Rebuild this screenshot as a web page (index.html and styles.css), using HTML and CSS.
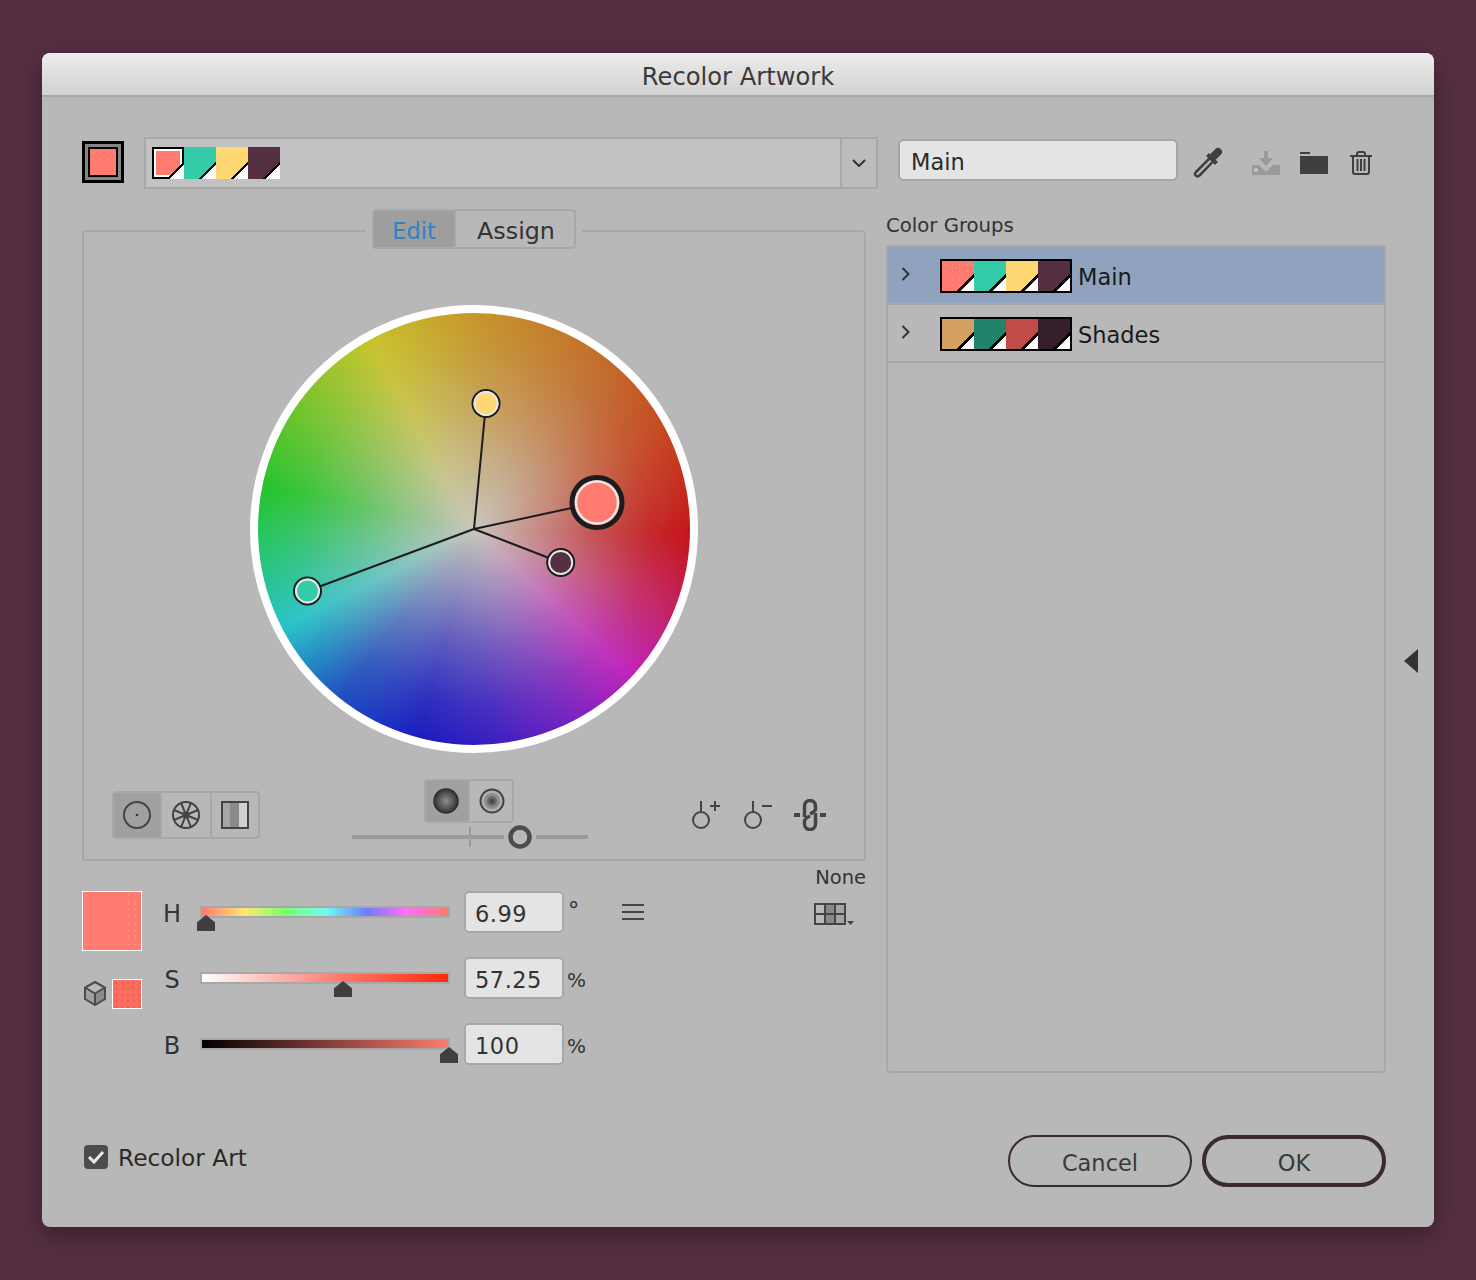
FILE: index.html
```html
<!DOCTYPE html>
<html lang="en">
<head>
    <meta charset="UTF-8">
    <title>Recolor Artwork</title>
    <link rel="stylesheet" href="styles.css">
</head>
<body>
    <div class="dialog">
        <div class="titlebar">Recolor Artwork</div>

        <div class="content">
            <!-- Active color, harmony strip, group name and group actions -->
            <div class="top-row">
                <div class="active-swatch"><div class="active-swatch-fill dotted"></div></div>
                <div class="strip">
                    <div class="strip-colors">
                        <div class="swatch coral selected dotted"></div>
                        <div class="swatch teal"></div>
                        <div class="swatch yellow"></div>
                        <div class="swatch plum"></div>
                    </div>
                    <div class="strip-arrow">
                        <svg width="14" height="8" viewBox="0 0 14 8"><path d="M1 1l6 6 6-6" fill="none" stroke="#333" stroke-width="2"/></svg>
                    </div>
                </div>
                <div class="name-field">Main</div>
                <svg class="icon-dropper" width="32" height="32" viewBox="0 0 32 32">
                    <path d="M22 9l4-4" stroke="#3f3f3f" stroke-width="8" stroke-linecap="round"/>
                    <path d="M15.500 7.500l9 9" stroke="#3f3f3f" stroke-width="4"/>
                    <path d="M18 11L4.500 24.500c-2 2-2 3-.7 4.200s2.200 1.300 4.200-.7L21 14.500" fill="none" stroke="#3f3f3f" stroke-width="2.500"/>
                </svg>
                <svg class="icon-save" width="28" height="26" viewBox="0 0 28 26">
                    <rect y="15" width="28" height="10" fill="#9a9a9a"/>
                    <path d="M7 15h14l-7 7z" fill="#b8b8b8"/>
                    <rect x="12" y="1" width="4" height="8" fill="#9a9a9a"/>
                    <path d="M7 8h14l-7 8z" fill="#9a9a9a"/>
                    <circle cx="4" cy="20" r="2" fill="#c6c6c6"/>
                </svg>
                <svg class="icon-folder" width="28" height="22" viewBox="0 0 28 22">
                    <rect width="10" height="2" fill="#3f3f3f"/>
                    <rect y="4" width="28" height="18" fill="#3f3f3f"/>
                </svg>
                <svg class="icon-trash" width="22" height="24" viewBox="0 0 22 24">
                    <path d="M0 5h22M7 5V3c0-1 1-2 2-2h4c1 0 2 1 2 2v2" fill="none" stroke="#3f3f3f" stroke-width="2"/>
                    <path d="M3 5v16c0 1 1 2 2 2h12c1 0 2-1 2-2V5" fill="none" stroke="#3f3f3f" stroke-width="2"/>
                    <path d="M7.500 8v12M11 8v12M14.500 8v12" stroke="#3f3f3f" stroke-width="2"/>
                </svg>
            </div>

            <div class="main">
                <div class="left-col">
                    <div class="panel">
                        <div class="tabs-wrap">
                            <div class="tabs">
                                <div class="tab active">Edit</div>
                                <div class="tab">Assign</div>
                            </div>
                        </div>

                        <!-- Color wheel with its harmony markers -->
                        <div class="wheel">
                            <svg class="wheel-markers" width="448" height="448" viewBox="0 0 448 448">
                                <g stroke="#1c1c1c" stroke-width="2">
                                    <path d="M224 224L236 98.500M224 224L347 197.500M224 224L310.700 257.500M224 224L57.500 286"/>
                                </g>
                                <circle cx="236" cy="98.500" r="13.500" fill="#ffd873" stroke="#1c1c1c" stroke-width="2"/>
                                <circle cx="236" cy="98.500" r="11.500" fill="none" stroke="#e6e6e6" stroke-width="2"/>
                                <circle cx="57.500" cy="286" r="13.500" fill="#33cba8" stroke="#1c1c1c" stroke-width="2"/>
                                <circle cx="57.500" cy="286" r="11.500" fill="none" stroke="#e6e6e6" stroke-width="2"/>
                                <circle cx="310.700" cy="257.500" r="13.500" fill="#552f42" stroke="#1c1c1c" stroke-width="2"/>
                                <circle cx="310.700" cy="257.500" r="11.500" fill="none" stroke="#e6e6e6" stroke-width="2"/>
                                <circle cx="347" cy="197.500" r="25" fill="#ff7b6f" stroke="#1c1c1c" stroke-width="5"/>
                                <circle cx="347" cy="197.500" r="21" fill="none" stroke="#e8e8e8" stroke-width="2.500"/>
                            </svg>
                        </div>

                        <div class="tools">
                            <div class="btn-group wheel-modes">
                                <div class="mode active">
                                    <svg width="30" height="30" viewBox="0 0 30 30"><circle cx="15" cy="15" r="13" fill="none" stroke="#444" stroke-width="2"/><circle cx="15" cy="15" r="1.300" fill="#333"/></svg>
                                </div>
                                <div class="mode">
                                    <svg width="30" height="30" viewBox="0 0 30 30">
                                        <circle cx="15" cy="15" r="13" fill="none" stroke="#444" stroke-width="2"/>
                                        <path transform="rotate(22.500 15 15)" d="M15 2v26M2 15h26M5.800 5.800l18.400 18.400M24.200 5.800L5.800 24.200" stroke="#444" stroke-width="2"/>
                                        <circle cx="15" cy="15" r="3.500" fill="#444"/>
                                    </svg>
                                </div>
                                <div class="mode">
                                    <svg width="30" height="30" viewBox="0 0 30 30">
                                        <rect x="2" y="2" width="9" height="26" fill="#a6a6a6"/>
                                        <rect x="10" y="2" width="9" height="26" fill="#8a8a8a"/>
                                        <rect x="19" y="2" width="9" height="26" fill="#d0d0d0"/>
                                        <rect x="2" y="2" width="26" height="26" fill="none" stroke="#444" stroke-width="2"/>
                                    </svg>
                                </div>
                            </div>

                            <div class="brightness">
                                <div class="btn-group shade-modes">
                                    <div class="mode active">
                                        <svg width="26" height="26" viewBox="0 0 26 26">
                                            <defs><radialGradient id="ballShade"><stop offset="0" stop-color="#8e8e8e"/><stop offset="1" stop-color="#333"/></radialGradient></defs>
                                            <circle cx="13" cy="13" r="12" fill="url(#ballShade)" stroke="#2e2e2e" stroke-width="1.500"/>
                                        </svg>
                                    </div>
                                    <div class="mode">
                                        <svg width="26" height="26" viewBox="0 0 26 26">
                                            <circle cx="13" cy="13" r="11.500" fill="#b0b0b0" stroke="#444" stroke-width="2"/>
                                            <circle cx="13" cy="13" r="8" fill="#8c8c8c"/>
                                            <circle cx="13" cy="13" r="5" fill="#6a6a6a"/>
                                            <circle cx="13" cy="13" r="2.500" fill="#4a4a4a"/>
                                        </svg>
                                    </div>
                                </div>
                                <svg class="brightness-slider" width="236" height="24" viewBox="0 0 236 24">
                                    <path d="M0 12h152M184 12h52" stroke="#9a9a9a" stroke-width="4"/>
                                    <path d="M118 2v20" stroke="#9a9a9a" stroke-width="2"/>
                                    <circle cx="168" cy="12" r="9.500" fill="none" stroke="#4c4c4c" stroke-width="4.500"/>
                                </svg>
                            </div>

                            <div class="link-tools">
                                <svg width="32" height="32" viewBox="0 0 32 32">
                                    <circle cx="11" cy="22" r="8" fill="none" stroke="#444" stroke-width="2"/>
                                    <path d="M11 14V3M20 8h10M25 3v10" fill="none" stroke="#444" stroke-width="2"/>
                                </svg>
                                <svg width="32" height="32" viewBox="0 0 32 32">
                                    <circle cx="11" cy="22" r="8" fill="none" stroke="#444" stroke-width="2"/>
                                    <path d="M11 14V3M20 8h10" fill="none" stroke="#444" stroke-width="2"/>
                                </svg>
                                <svg class="icon-link" width="32" height="32" viewBox="0 0 32 32">
                                    <path d="M0 16h6M26 16h6" stroke="#444" stroke-width="4"/>
                                    <path d="M10.500 18V7a5.500 5.500 0 0 1 11 0v3c0 2-3.500 4-5.500 5" fill="none" stroke="#444" stroke-width="3.500"/>
                                    <path d="M21.500 14v11a5.500 5.500 0 0 1-11 0v-3c0-2 3.500-4 5.500-5" fill="none" stroke="#444" stroke-width="3.500"/>
                                </svg>
                            </div>
                        </div>
                    </div>

                    <!-- Hue, saturation and brightness sliders -->
                    <div class="hsb">
                        <div class="hsb-swatches">
                            <div class="big-swatch dotted"></div>
                            <div class="web-swatch">
                                <svg width="24" height="26" viewBox="0 0 24 26">
                                    <path d="M12 15V25L22 19V8z" fill="#8c8c8c"/>
                                    <path d="M12 15V25L2 19V8z" fill="#a0a0a0"/>
                                    <path d="M12 2L22 7.500V19L12 25L2 19V7.500zM2 7.500L12 13.500L22 7.500M12 13.500V25" fill="none" stroke="#4a4a4a" stroke-width="2"/>
                                </svg>
                                <div class="small-swatch"></div>
                            </div>
                        </div>

                        <div class="hsb-rows">
                            <div class="hsb-row">
                                <div class="hsb-label">H</div>
                                <div class="track track-h"><div class="thumb thumb-h"></div></div>
                                <div class="value-field">6.99</div>
                                <div class="unit unit-degree">°</div>
                                <div class="menu-lines"><span></span><span></span><span></span></div>
                            </div>
                            <div class="hsb-row">
                                <div class="hsb-label">S</div>
                                <div class="track track-s"><div class="thumb thumb-s"></div></div>
                                <div class="value-field">57.25</div>
                                <div class="unit">%</div>
                            </div>
                            <div class="hsb-row">
                                <div class="hsb-label">B</div>
                                <div class="track track-b"><div class="thumb thumb-b"></div></div>
                                <div class="value-field">100</div>
                                <div class="unit">%</div>
                            </div>
                        </div>

                        <div class="limit">
                            <div class="limit-label">None</div>
                            <svg class="limit-icon" width="42" height="22" viewBox="0 0 42 22">
                                <rect x="12" y="1" width="10" height="20" fill="#888"/>
                                <rect x="22" y="1" width="9" height="20" fill="#a4a4a4"/>
                                <path d="M1 1h30v20H1zM1 11h30M11 1v20M21 1v20" fill="none" stroke="#444" stroke-width="2"/>
                                <path d="M33 18h7l-3.500 4z" fill="#444"/>
                            </svg>
                        </div>
                    </div>
                </div>

                <div class="right-col">
                    <div class="groups-title">Color Groups</div>
                    <div class="groups">
                        <div class="group-row selected-row">
                            <svg class="chevron" width="10" height="14" viewBox="0 0 10 14"><path d="M1.500 1l6 6-6 6" fill="none" stroke="#333" stroke-width="2"/></svg>
                            <div class="group-strip">
                                <div class="swatch coral dotted"></div>
                                <div class="swatch teal"></div>
                                <div class="swatch yellow"></div>
                                <div class="swatch plum"></div>
                            </div>
                            <div class="group-name">Main</div>
                        </div>
                        <div class="group-row">
                            <svg class="chevron" width="10" height="14" viewBox="0 0 10 14"><path d="M1.500 1l6 6-6 6" fill="none" stroke="#333" stroke-width="2"/></svg>
                            <div class="group-strip">
                                <div class="swatch tan"></div>
                                <div class="swatch pine"></div>
                                <div class="swatch brick"></div>
                                <div class="swatch wine"></div>
                            </div>
                            <div class="group-name">Shades</div>
                        </div>
                    </div>
                </div>
            </div>

            <div class="bottom-row">
                <div class="recolor-check">
                    <div class="checkbox">
                        <svg width="18" height="14" viewBox="0 0 18 14"><path d="M2 7l5 5 9-10" fill="none" stroke="#eaeaea" stroke-width="3"/></svg>
                    </div>
                    <div>Recolor Art</div>
                </div>
                <div class="buttons">
                    <div class="btn">Cancel</div>
                    <div class="btn btn-default">OK</div>
                </div>
            </div>
        </div>

        <!-- Collapse arrow on the dialog edge -->
        <div class="collapse-arrow"></div>
    </div>
</body>
</html>
```

FILE: styles.css
```css
* {
    box-sizing: border-box;
}

body {
    margin: 0;
    padding: 53px 42px 0;
    height: 1280px;
    overflow: hidden;
    background-color: #552f42;
    font-family: "DejaVu Sans", sans-serif;
    font-size: 22.5px;
    color: #333;
}

.dialog {
    position: relative;
    width: 1392px;
    height: 1174px;
    background-color: #b8b8b8;
    border-radius: 8px;
    box-shadow: 0 8px 24px rgba(0, 0, 0, 0.35);
}

.titlebar {
    height: 44px;
    line-height: 48px;
    text-align: center;
    font-size: 24.2px;
    color: #3a3a3a;
    background: linear-gradient(#ececec, #d2d2d2);
    border-bottom: 2px solid #a9a9a9;
    border-radius: 8px 8px 0 0;
}

.content {
    padding: 40px 48px 0 40px;
}

.dotted {
    background-image: radial-gradient(rgba(255, 255, 255, 0.28) 0.6px, transparent 1px);
    background-size: 7px 7px;
}

/* top row */
.top-row {
    display: flex;
    align-items: center;
    height: 52px;
}

.active-swatch {
    width: 42px;
    height: 42px;
    margin-bottom: 2px;
    padding: 3px;
    border: 3px solid #000;
    background-color: #868686;
}

.active-swatch-fill {
    width: 100%;
    height: 100%;
    border: 2px solid #000;
    background-color: #ff7b6f;
}

.strip {
    display: flex;
    width: 734px;
    height: 52px;
    margin-left: 20px;
    border: 2px solid #a8a8a8;
    background-color: #c2c2c2;
}

.strip-colors {
    display: flex;
    flex: 1;
    padding: 8px 6px;
}

.strip-arrow {
    display: flex;
    align-items: center;
    justify-content: center;
    width: 36px;
    border-left: 2px solid #a8a8a8;
    background-color: #bcbcbc;
}

.swatch {
    position: relative;
    width: 32px;
    height: 32px;
}

.swatch::after {
    content: "";
    position: absolute;
    inset: 0;
    background: linear-gradient(135deg, transparent 72%, #000 72%, #000 78%, #fff 78%);
}

.swatch.selected {
    box-shadow: inset 0 0 0 2px #000, inset 0 0 0 4px #fff;
}

.coral { background-color: #ff7b6f; }
.teal { background-color: #33cba8; }
.yellow { background-color: #ffd873; }
.plum { background-color: #552f42; }
.tan { background-color: #d4a060; }
.pine { background-color: #20836a; }
.brick { background-color: #c04c48; }
.wine { background-color: #341f2b; }

.name-field {
    width: 280px;
    height: 42px;
    margin-left: 20px;
    margin-bottom: 6px;
    padding-left: 11px;
    line-height: 43px;
    color: #2a2a2a;
    background-color: #e4e4e4;
    border: 2px solid #a5a5a5;
    border-radius: 6px;
}

.icon-dropper { margin-left: 14px; }
.icon-save { margin-left: 28px; }
.icon-folder { margin-left: 20px; }
.icon-trash { margin-left: 22px; }

/* main area */
.main {
    display: grid;
    grid-template-columns: 784px 500px;
    column-gap: 20px;
    margin-top: 20px;
}

.panel {
    height: 631px;
    margin-top: 21px;
    border: 2px solid #a8a8a8;
    border-radius: 4px;
}

.tabs-wrap {
    width: 216px;
    margin: -23px auto 0;
    padding: 0 6px;
    background-color: #b8b8b8;
}

.tabs {
    display: flex;
    height: 40px;
    border: 2px solid #a8a8a8;
    border-radius: 4px;
}

.tab {
    width: 118px;
    padding-left: 2px;
    font-size: 23.8px;
    line-height: 40px;
    text-align: center;
}

.tab.active {
    width: 82px;
    padding-left: 0;
    font-size: 22.5px;
    color: #2f82c6;
    background-color: #9e9e9e;
    border-right: 2px solid #a8a8a8;
}

.wheel {
    position: relative;
    width: 448px;
    height: 448px;
    margin: 56px auto 0;
    border: 8px solid #fff;
    border-radius: 50%;
    background:
        radial-gradient(circle closest-side, rgba(200, 198, 188, 1) 0, rgba(200, 198, 188, 0.68) 28%, rgba(200, 198, 188, 0.36) 55%, rgba(200, 198, 188, 0.12) 80%, rgba(200, 198, 188, 0) 100%),
        conic-gradient(from 0deg, #c6962a 0deg, #c2682a 41deg, #c64a20 61deg, #c4141a 92deg, #c42060 112deg, #c023bb 133deg, #7622c0 153deg, #3a1ec0 175deg, #1a1cc0 195deg, #1f50c0 219deg, #2090c4 232deg, #28c4c8 243deg, #24c42c 281deg, #c8c42c 331deg, #c6962a 360deg);
}

.wheel-markers {
    position: absolute;
    top: -8px;
    left: -8px;
}

.tools {
    display: flex;
    align-items: flex-start;
    margin-top: 26px;
    padding-left: 28px;
}

.btn-group {
    display: flex;
    border: 2px solid #a8a8a8;
    border-radius: 4px;
}

.wheel-modes {
    width: 148px;
    height: 48px;
    margin-top: 12px;
}

.shade-modes {
    width: 90px;
    height: 44px;
    margin-right: 2px;
}

.mode {
    display: flex;
    flex: 1;
    align-items: center;
    justify-content: center;
    border-left: 2px solid #a8a8a8;
}

.mode:first-child {
    border-left: 0;
}

.mode.active {
    background-color: #a0a0a0;
}

.wheel-modes .mode.active {
    flex: 0 0 46px;
}

.wheel-modes .mode:nth-child(2) {
    flex: 0 0 50px;
}

.shade-modes .mode.active {
    flex: 0 0 42px;
    padding-right: 2px;
}

.shade-modes .mode:nth-child(2) {
    padding-left: 2px;
}

.brightness {
    display: flex;
    flex-direction: column;
    align-items: center;
    width: 236px;
    margin-left: 92px;
}

.brightness-slider {
    margin-top: 2px;
}

.link-tools {
    display: flex;
    gap: 20px;
    margin-left: 102px;
    margin-top: 19px;
}

.icon-link {
    margin-top: 1px;
}

/* hsb */
.hsb {
    display: flex;
    margin-top: 30px;
}

.hsb-swatches {
    width: 60px;
}

.big-swatch {
    width: 60px;
    height: 60px;
    background-color: #ff7b6f;
    border: 1px solid #fff;
}

.web-swatch {
    display: flex;
    align-items: flex-start;
    margin-top: 28px;
}

.web-swatch svg {
    margin-top: 1px;
    margin-left: 1px;
    margin-right: 5px;
}

.small-swatch {
    width: 30px;
    height: 30px;
    background-color: #ff6d5c;
    background-image: radial-gradient(rgba(160, 40, 170, 0.35) 0.6px, transparent 1px);
    background-size: 6px 6px;
    border: 1px solid #fff;
}

.hsb-rows {
    display: flex;
    flex-direction: column;
    gap: 24px;
    margin-left: 21px;
}

.hsb-row {
    display: flex;
    align-items: center;
    height: 42px;
}

.hsb-label {
    width: 18px;
    margin-top: 4px;
    margin-right: 19px;
    font-size: 24px;
    text-align: center;
}

.track {
    position: relative;
    width: 250px;
    height: 12px;
    border: 2px solid #a8a8a8;
    margin-right: 14px;
}

.track-h {
    background: linear-gradient(90deg, #ff7b6f, #ffe96f 17%, #7bff6f 34%, #6ffff0 50%, #6f7bff 67%, #ff6ff8 83%, #ff7b6f);
}

.track-s {
    background: linear-gradient(90deg, #fff, #ff7b6f 55%, #ff2a0a);
}

.track-b {
    background: linear-gradient(90deg, #000, #ff7b6f);
}

.thumb {
    position: absolute;
    top: 7px;
    width: 18px;
    height: 16px;
    background-color: #3f3f3f;
    clip-path: polygon(50% 0, 100% 45%, 100% 100%, 0 100%, 0 45%);
}

.thumb-h { left: -5px; }
.thumb-s { left: 132px; }
.thumb-b { left: 238px; }

.value-field {
    width: 100px;
    height: 42px;
    padding-left: 9px;
    line-height: 43px;
    letter-spacing: 0.5px;
    background-color: #e4e4e4;
    border: 2px solid #a8a8a8;
    border-radius: 5px;
}

.unit {
    width: 22px;
    margin-left: 3px;
    margin-top: 4px;
    font-size: 20px;
}

.unit-degree {
    align-self: flex-start;
    margin-left: 4px;
    margin-top: 0;
    font-size: 22.5px;
    line-height: 38px;
}

.menu-lines {
    display: flex;
    flex-direction: column;
    gap: 5px;
    margin-left: 32px;
}

.menu-lines span {
    display: block;
    width: 22px;
    height: 2px;
    background-color: #444;
}

.limit {
    display: flex;
    flex-direction: column;
    align-items: flex-end;
    margin-left: auto;
    margin-top: -26px;
}

.limit-label {
    font-size: 19.5px;
    line-height: 26px;
}

.limit-icon {
    margin-top: 12px;
    margin-right: 10px;
}

/* color groups */
.groups-title {
    font-size: 19.7px;
    line-height: 34px;
    height: 36px;
}

.groups {
    height: 828px;
    border: 2px solid #a8a8a8;
    border-radius: 4px;
}

.group-row {
    display: flex;
    align-items: flex-start;
    height: 58px;
    padding: 12px 0 0 13px;
    border-bottom: 2px solid #a8a8a8;
}

.selected-row {
    background-color: #8fa3bf;
}

.chevron {
    margin-top: 8px;
}

.group-strip {
    display: flex;
    margin-left: 29px;
    border: 2px solid #000;
}

.group-strip .swatch {
    height: 30px;
}

.group-name {
    margin-left: 6px;
    line-height: 36px;
    color: #1a1a1a;
}

/* bottom */
.bottom-row {
    display: flex;
    justify-content: space-between;
    align-items: flex-start;
    margin-top: 62px;
}

.recolor-check {
    display: flex;
    align-items: center;
    margin-top: 9px;
    margin-left: 2px;
    gap: 10px;
    font-size: 23.3px;
    color: #2a2a2a;
}

.checkbox {
    display: flex;
    align-items: center;
    justify-content: center;
    width: 24px;
    height: 24px;
    margin-top: -2px;
    background-color: #4c4c4c;
    border-radius: 4px;
}

.buttons {
    display: flex;
    gap: 10px;
}

.btn {
    width: 184px;
    height: 52px;
    line-height: 52px;
    text-align: center;
    border: 2px solid #3a2a32;
    border-radius: 26px;
    color: #3a3a3a;
}

.btn-default {
    line-height: 48px;
    border-width: 4px;
}

.collapse-arrow {
    position: absolute;
    top: 596px;
    left: 1362px;
    width: 0;
    height: 0;
    border-top: 12px solid transparent;
    border-bottom: 12px solid transparent;
    border-right: 14px solid #333;
}
```
